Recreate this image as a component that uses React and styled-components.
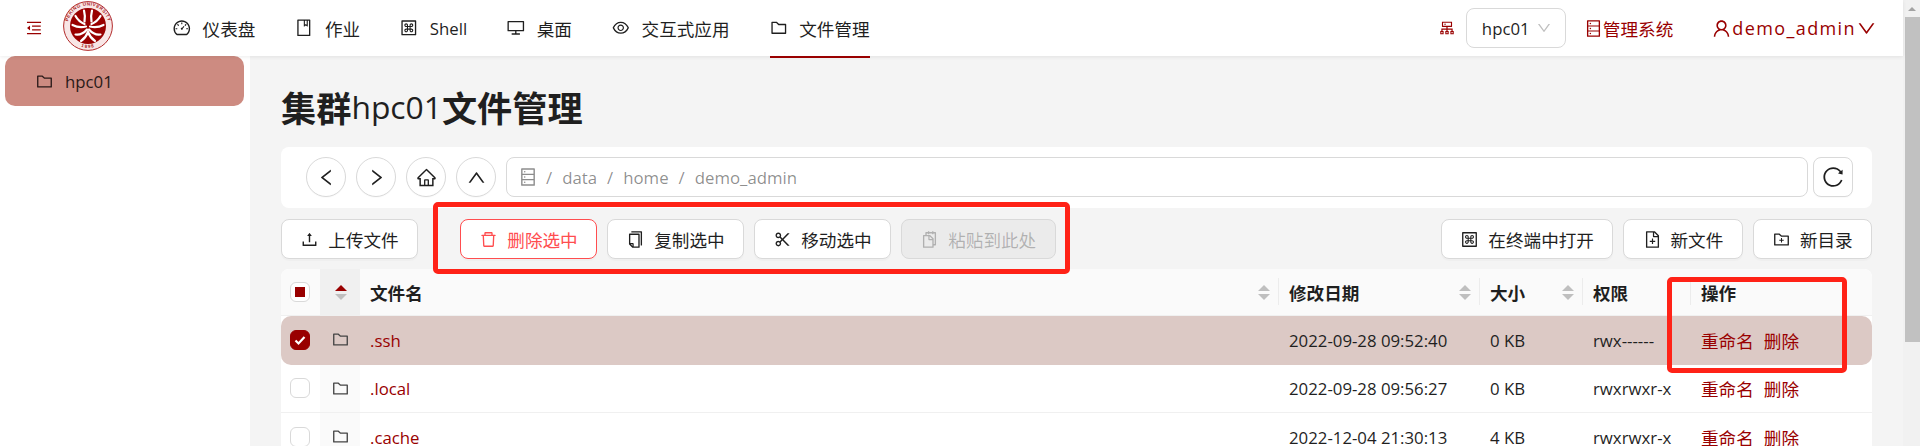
import React from 'react';
import styled, { createGlobalStyle } from 'styled-components';
import {
  AiOutlineBook,
  AiOutlineCluster,
  AiOutlineCopy,
  AiOutlineDashboard,
  AiOutlineDatabase,
  AiOutlineDelete,
  AiOutlineDesktop,
  AiOutlineDown,
  AiOutlineEye,
  AiOutlineFileAdd,
  AiOutlineFolder,
  AiOutlineFolderAdd,
  AiOutlineHome,
  AiOutlineLeft,
  AiOutlineMacCommand,
  AiOutlineMenuFold,
  AiOutlineReload,
  AiOutlineRight,
  AiOutlineScissor,
  AiOutlineSnippets,
  AiOutlineUp,
  AiOutlineUpload,
  AiOutlineUser,
} from 'react-icons/ai';

const brand = '#990000';
const tableColumns = '39px 40px 919px 201px 103px 108px 1fr';

const GlobalStyle = createGlobalStyle`
  html, body {
    height: 100%;
    overflow: hidden;
  }
  body {
    margin: 0;
    background: #f4f4f4;
    font-family: "Open Sans", "Noto Sans CJK SC", sans-serif;
    font-size: 17.6px;
    color: #1f1f1f;
  }
  #root {
    height: 100%;
  }
`;

const Window = styled.div`
  height: 100vh;
  display: flex;
  overflow: hidden;
`;

const Page = styled.div`
  position: relative;
  flex: 1;
  min-width: 0;
  display: flex;
  flex-direction: column;
`;

const Scrollbar = styled.div`
  width: 17px;
  flex: none;
  background: #f1f1f1;
  display: flex;
  flex-direction: column;
`;

const ScrollArrow = styled.div`
  height: 17px;
  flex: none;
  display: flex;
  align-items: center;
  justify-content: center;

  &::before {
    content: '';
    width: 0;
    height: 0;
    border-left: 4px solid transparent;
    border-right: 4px solid transparent;
    border-bottom: 4px solid #a3a3a3;
  }
`;

const ScrollThumb = styled.div`
  height: 325px;
  margin-left: 2px;
  background: #c1c1c1;
`;

const Header = styled.header`
  height: 56px;
  flex: none;
  display: flex;
  align-items: center;
  background: white;
  box-shadow: 0 1px 4px rgba(0, 0, 0, 0.08);
  position: relative;
  z-index: 1;
`;

const MenuToggle = styled.span`
  width: 63px;
  padding-left: 25px;
  box-sizing: border-box;
  display: flex;
  color: ${brand};
  font-size: 18px;
`;

const Logo = styled.svg`
  width: 50px;
  height: 50px;
  margin: 0 60px 4px 0;
  flex: none;
`;

const Nav = styled.nav`
  display: flex;
  gap: 40px;
  height: 100%;
`;

const NavItem = styled.a`
  display: flex;
  align-items: center;
  gap: 12px;
  height: 56px;
  box-sizing: border-box;
  position: relative;
  color: #1f1f1f;

  svg {
    font-size: 17.6px;
    flex: none;
    transform: scale(1.08);
  }

  ${(p) => p.$active && `
    &::after {
      content: '';
      position: absolute;
      left: 0;
      right: 0;
      bottom: -2px;
      height: 2px;
      background: ${brand};
    }
  `}
`;

const Latin = styled.span`
  font-size: 16.8px;
`;

const HeaderRight = styled.div`
  margin-left: auto;
  display: flex;
  align-items: center;
  color: ${brand};
`;

const ClusterIcon = styled.span`
  display: flex;
  font-size: 18px;
  margin-right: 10px;
`;

const ClusterSelect = styled.div`
  width: 100px;
  height: 40px;
  box-sizing: border-box;
  border: 1px solid #d9d9d9;
  border-radius: 8px;
  padding: 0 13px 0 15px;
  display: flex;
  align-items: center;
  justify-content: space-between;
  color: #1f1f1f;

  svg {
    color: #bfbfbf;
    font-size: 16px;
  }
`;

const AdminLink = styled.a`
  display: flex;
  align-items: center;
  margin-left: 18px;
  color: ${brand};

  svg {
    font-size: 19px;
    flex: none;
  }
`;

const UserLink = styled.a`
  display: flex;
  align-items: center;
  margin: 0 26px 0 38px;
  color: ${brand};

  svg {
    font-size: 21px;
    flex: none;
  }
`;

const UserName = styled.span`
  font-size: 18px;
  letter-spacing: 1.4px;
`;

const Body = styled.div`
  flex: 1;
  display: flex;
`;

const Sidebar = styled.aside`
  width: 250px;
  flex: none;
  background: white;
  padding: 0 6px 0 5px;
  box-sizing: border-box;
  box-shadow: 1px 0 2px rgba(0, 0, 0, 0.04);
`;

const SideItem = styled.div`
  height: 50px;
  border-radius: 10px;
  background: #cd8b81;
  display: flex;
  align-items: center;
  gap: 11px;
  padding-left: 30px;
  color: #2a1a18;

  svg {
    font-size: 19px;
  }
`;

const Main = styled.main`
  flex: 1;
  min-width: 0;
  background: #f4f4f4;
  padding: 0 31px;
`;

const Title = styled.h1`
  margin: 0;
  height: 91px;
  box-sizing: border-box;
  padding-top: 9px;
  display: flex;
  align-items: center;
  font-size: 35.2px;
  font-weight: 700;
  color: #1f1f1f;
`;

const TitleName = styled.span`
  font-size: 31.8px;
  font-weight: 500;
`;

const PathCard = styled.div`
  height: 61px;
  box-sizing: border-box;
  background: white;
  border-radius: 8px;
  padding: 10px 19px 11px 25px;
  display: flex;
  gap: 10px;
`;

const RoundButton = styled.button`
  width: 40px;
  height: 40px;
  flex: none;
  padding: 0;
  border: 1px solid #d9d9d9;
  border-radius: 50%;
  background: white;
  color: #1f1f1f;
  display: flex;
  align-items: center;
  justify-content: center;
  font-size: 21px;
  box-shadow: 0 1px 0 rgba(0, 0, 0, 0.02);
`;

const PathBox = styled.div`
  flex: 1;
  height: 40px;
  box-sizing: border-box;
  border: 1px solid #d9d9d9;
  border-radius: 8px;
  display: flex;
  align-items: center;
  gap: 10px;
  padding-left: 11px;
  color: rgba(0, 0, 0, 0.45);

  svg {
    font-size: 20px;
    margin-right: -2px;
  }
`;

const RefreshButton = styled(RoundButton)`
  border-radius: 8px;
  margin-left: -5px;
  font-size: 24px;
`;

const Toolbar = styled.div`
  margin-top: 11px;
  height: 50px;
  display: flex;
  align-items: flex-start;
  gap: 10px;
`;

const Gap = styled.div`
  width: 22px;
`;

const ToolButton = styled.button`
  height: 40px;
  box-sizing: border-box;
  padding: 0 18.3px;
  border: 1px solid ${(p) => (p.$danger ? '#ff4d4f' : '#d9d9d9')};
  border-radius: 8px;
  background: ${(p) => (p.disabled ? '#ebebeb' : 'white')};
  color: ${(p) => (p.$danger ? '#ff4d4f' : p.disabled ? 'rgba(0, 0, 0, 0.25)' : '#1f1f1f')};
  font: inherit;
  display: flex;
  align-items: center;
  gap: 9px;
  box-shadow: ${(p) => (p.disabled ? 'none' : '0 2px 0 rgba(0, 0, 0, 0.02)')};

  svg {
    font-size: 19px;
    flex: none;
  }
`;

const ToolbarRight = styled.div`
  margin-left: auto;
  display: flex;
  gap: 10px;
`;

const Table = styled.div`
  background: white;
  border-radius: 8px 8px 0 0;
`;

const HeadRow = styled.div`
  display: grid;
  grid-template-columns: ${tableColumns};
  height: 47px;
  background: #fafafa;
  border-bottom: 1px solid #f0f0f0;
  box-sizing: border-box;
  border-radius: 8px 8px 0 0;
  font-weight: 700;
`;

const HeadCell = styled.div`
  display: flex;
  align-items: center;
  justify-content: ${(p) => (p.$sorted ? 'center' : 'space-between')};
  padding: 0 9px 0 10px;
  position: relative;
  background: ${(p) => (p.$sorted ? '#f0f0f0' : 'transparent')};

  ${(p) => p.$divider && `
    &::after {
      content: '';
      position: absolute;
      right: 0;
      top: 9px;
      bottom: 10px;
      width: 1px;
      background: #ececec;
    }
  `}
`;

const Row = styled.div`
  display: grid;
  grid-template-columns: ${tableColumns};
  height: 48.5px;
  box-sizing: border-box;
  background: ${(p) => (p.$selected ? '#dcc9c5' : 'white')};
  border-radius: ${(p) => (p.$selected ? '10px' : '0')};
  border-bottom: 1px solid ${(p) => (p.$selected ? 'transparent' : '#f0f0f0')};
`;

const Cell = styled.div`
  display: flex;
  align-items: center;
  padding: 1px 10px 0;
  gap: 10px;
  color: ${(p) => (p.$link ? brand : '#1f1f1f')};
  font-size: ${(p) => (p.$mono ? '16.8px' : 'inherit')};
  white-space: nowrap;
`;

const IconCell = styled(Cell)`
  justify-content: center;
  padding: 0;
  color: #444;
  font-size: 19px;
  background: ${(p) => (p.$selected ? 'transparent' : '#fafafa')};
`;

const CheckCell = styled(Cell)`
  padding: 0 0 0 9px;
`;

const Checkbox = styled.span`
  width: 20px;
  height: 20px;
  box-sizing: border-box;
  border-radius: 6px;
  border: 1px solid ${(p) => (p.$checked ? brand : '#d9d9d9')};
  background: ${(p) => (p.$checked ? brand : 'white')};
  display: flex;
  align-items: center;
  justify-content: center;
  flex: none;
`;

const CheckMark = styled.svg`
  width: 14px;
  height: 14px;
`;

const Partial = styled.span`
  width: 10px;
  height: 10px;
  background: ${brand};
`;

const SortWrap = styled.span`
  display: flex;
  flex-direction: column;
  gap: 3px;
  align-items: center;
`;

const Caret = styled.span`
  width: 0;
  height: 0;
  border-left: 6px solid transparent;
  border-right: 6px solid transparent;
  ${(p) => (p.$down ? 'border-top' : 'border-bottom')}: 6px solid ${(p) => (p.$on ? brand : '#bfbfbf')};
`;

const Marker = styled.div`
  position: absolute;
  left: ${(p) => p.$x}px;
  top: ${(p) => p.$y}px;
  width: ${(p) => p.$w}px;
  height: ${(p) => p.$h}px;
  box-sizing: border-box;
  border: 5px solid #ff2217;
  border-radius: 5px;
  pointer-events: none;
  z-index: 2;
`;

const SortIcon = ({ on }) => (
  <SortWrap>
    <Caret $on={on} />
    <Caret $down />
  </SortWrap>
);

// 校徽: keeps the ring text as svg text on a circular path
const PkuLogo = () => (
  <Logo viewBox="0 0 50 50">
    <defs>
      <path id="topArc" d="M4.5 25a20.500 20.500 0 0 1 41 0" />
      <path id="bottomArc" d="M5 31a20.500 20.500 0 0 0 40 0" />
    </defs>
    <circle cx="25" cy="25" r="24.400" fill="#f8e6e6" stroke="#b22a2a" strokeWidth="1" />
    <text fontSize="4.600" fontFamily="Liberation Sans" fontWeight="700" fill="#a82020" letterSpacing="0.500">
      <textPath href="#topArc" startOffset="50%" textAnchor="middle">PEKING UNIVERSITY</textPath>
    </text>
    <text fontSize="4.600" fontFamily="Liberation Sans" fontWeight="700" fill="#a82020" letterSpacing="1">
      <textPath href="#bottomArc" startOffset="50%" textAnchor="middle">1898</textPath>
    </text>
    <circle cx="25" cy="25" r="18" fill={brand} />
    <g fill="none" stroke="white" strokeWidth="2.200" strokeLinecap="round">
      <path d="M21 9.500c1 3.500 1 7.500 .5 11" />
      <path d="M29 9.500c-1 3.500-1 7.500-.5 11" />
      <path d="M12.500 15c2 3.500 5 6.500 9 8" />
      <path d="M37.500 15c-2 3.500-5 6.500-9 8" />
      <path d="M9.500 24c4 2 9 2.500 13.500 1.500" />
      <path d="M40.500 24c-4 2-9 2.500-13.500 1.500" />
      <path d="M12.500 33.500c4 .5 8.500-1.500 11.500-5" />
      <path d="M37.500 33.500c-4 .5-8.500-1.500-11.500-5" />
      <path d="M18 40c3-2 5.500-5 7-9 1.500 4 4 7 7 9" />
    </g>
  </Logo>
);

const rows = [
  { name: '.ssh', date: '2022-09-28 09:52:40', size: '0 KB', mode: 'rwx------', selected: true },
  { name: '.local', date: '2022-09-28 09:56:27', size: '0 KB', mode: 'rwxrwxr-x' },
  { name: '.cache', date: '2022-12-04 21:30:13', size: '4 KB', mode: 'rwxrwxr-x' },
];

const navItems = [
  { icon: <AiOutlineDashboard />, label: '仪表盘' },
  { icon: <AiOutlineBook />, label: '作业' },
  { icon: <AiOutlineMacCommand />, label: <Latin>Shell</Latin> },
  { icon: <AiOutlineDesktop />, label: '桌面' },
  { icon: <AiOutlineEye />, label: '交互式应用' },
  { icon: <AiOutlineFolder />, label: '文件管理', active: true },
];

const App = () => {
  return (
    <Window>
      <GlobalStyle />
      <Page>
        <Header>
          <MenuToggle><AiOutlineMenuFold /></MenuToggle>
          <PkuLogo />
          <Nav>
            {navItems.map((item, i) => (
              <NavItem key={i} $active={item.active}>
                {item.icon}
                <span>{item.label}</span>
              </NavItem>
            ))}
          </Nav>
          <HeaderRight>
            <ClusterIcon><AiOutlineCluster /></ClusterIcon>
            <ClusterSelect>
              <Latin>hpc01</Latin>
              <AiOutlineDown />
            </ClusterSelect>
            <AdminLink><AiOutlineDatabase />管理系统</AdminLink>
            <UserLink>
              <AiOutlineUser />
              <UserName>demo_admin</UserName>
              <AiOutlineDown />
            </UserLink>
          </HeaderRight>
        </Header>

        <Body>
          <Sidebar>
            <SideItem>
              <AiOutlineFolder />
              <Latin>hpc01</Latin>
            </SideItem>
          </Sidebar>

          <Main>
            <Title>集群<TitleName>hpc01</TitleName>文件管理</Title>

            <PathCard>
              <RoundButton><AiOutlineLeft /></RoundButton>
              <RoundButton><AiOutlineRight /></RoundButton>
              <RoundButton><AiOutlineHome /></RoundButton>
              <RoundButton><AiOutlineUp /></RoundButton>
              <PathBox>
                <AiOutlineDatabase />
                <Latin>/</Latin>
                <Latin>data</Latin>
                <Latin>/</Latin>
                <Latin>home</Latin>
                <Latin>/</Latin>
                <Latin>demo_admin</Latin>
              </PathBox>
              <RefreshButton><AiOutlineReload /></RefreshButton>
            </PathCard>

            <Toolbar>
              <ToolButton><AiOutlineUpload />上传文件</ToolButton>
              <Gap />
              <ToolButton $danger><AiOutlineDelete />删除选中</ToolButton>
              <ToolButton><AiOutlineCopy />复制选中</ToolButton>
              <ToolButton><AiOutlineScissor />移动选中</ToolButton>
              <ToolButton disabled><AiOutlineSnippets />粘贴到此处</ToolButton>
              <ToolbarRight>
                <ToolButton><AiOutlineMacCommand />在终端中打开</ToolButton>
                <ToolButton><AiOutlineFileAdd />新文件</ToolButton>
                <ToolButton><AiOutlineFolderAdd />新目录</ToolButton>
              </ToolbarRight>
            </Toolbar>

            <Table>
              <HeadRow>
                <CheckCell>
                  <Checkbox><Partial /></Checkbox>
                </CheckCell>
                <HeadCell $sorted><SortIcon on /></HeadCell>
                <HeadCell $divider>文件名<SortIcon /></HeadCell>
                <HeadCell $divider>修改日期<SortIcon /></HeadCell>
                <HeadCell $divider>大小<SortIcon /></HeadCell>
                <HeadCell $divider>权限</HeadCell>
                <HeadCell>操作</HeadCell>
              </HeadRow>
              {rows.map((row) => (
                <Row key={row.name} $selected={row.selected}>
                  <CheckCell>
                    <Checkbox $checked={row.selected}>
                      {row.selected && (
                        <CheckMark viewBox="0 0 14 14">
                          <path d="M2.500 7.500l3 3 6-6.500" fill="none" stroke="white" strokeWidth="2.200" />
                        </CheckMark>
                      )}
                    </Checkbox>
                  </CheckCell>
                  <IconCell $selected={row.selected}><AiOutlineFolder /></IconCell>
                  <Cell $link $mono>{row.name}</Cell>
                  <Cell $mono>{row.date}</Cell>
                  <Cell $mono>{row.size}</Cell>
                  <Cell $mono>{row.mode}</Cell>
                  <Cell $link>
                    <span>重命名</span>
                    <span>删除</span>
                  </Cell>
                </Row>
              ))}
            </Table>
          </Main>
        </Body>

        <Marker $x={433} $y={202} $w={637} $h={72} />
        <Marker $x={1667} $y={277} $w={180} $h={96} />
      </Page>
      <Scrollbar>
        <ScrollArrow />
        <ScrollThumb />
      </Scrollbar>
    </Window>
  );
};

export default App;
